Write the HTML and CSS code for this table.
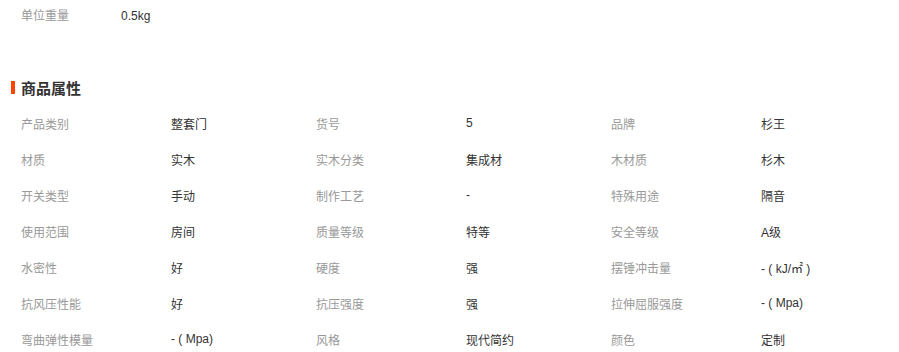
FILE: index.html
```html
<!DOCTYPE html>
<html lang="zh">
<head>
<meta charset="utf-8">
<link rel="stylesheet" href="styles.css">
</head>
<body>
<div class="page">
  <div class="top-row">
    <span class="top-label">单位重量</span>
    <span class="top-value">0.5kg</span>
  </div>
  <h2 class="section-title"><span class="bar"></span>商品属性</h2>
  <div class="attrs">
    <span class="k">产品类别</span><span class="v">整套门</span>
    <span class="k">货号</span><span class="v">5</span>
    <span class="k">品牌</span><span class="v">杉王</span>
    <span class="k">材质</span><span class="v">实木</span>
    <span class="k">实木分类</span><span class="v">集成材</span>
    <span class="k">木材质</span><span class="v">杉木</span>
    <span class="k">开关类型</span><span class="v">手动</span>
    <span class="k">制作工艺</span><span class="v">-</span>
    <span class="k">特殊用途</span><span class="v">隔音</span>
    <span class="k">使用范围</span><span class="v">房间</span>
    <span class="k">质量等级</span><span class="v">特等</span>
    <span class="k">安全等级</span><span class="v">A级</span>
    <span class="k">水密性</span><span class="v">好</span>
    <span class="k">硬度</span><span class="v">强</span>
    <span class="k">摆锤冲击量</span><span class="v">- ( kJ/㎡ )</span>
    <span class="k">抗风压性能</span><span class="v">好</span>
    <span class="k">抗压强度</span><span class="v">强</span>
    <span class="k">拉伸屈服强度</span><span class="v">- ( Mpa)</span>
    <span class="k">弯曲弹性模量</span><span class="v">- ( Mpa)</span>
    <span class="k">风格</span><span class="v">现代简约</span>
    <span class="k">颜色</span><span class="v">定制</span>
  </div>
</div>
</body>
</html>
```
FILE: styles.css
```css
html, body {
  margin: 0;
  padding: 0;
  background: #fff;
}
body {
  font-family: "Liberation Sans", "Noto Sans CJK SC", sans-serif;
  font-size: 12px;
  color: #333;
}
.page {
  width: 899px;
}
.top-row {
  display: flex;
  padding-left: 21px;
  height: 32px;
  line-height: 32px;
}
.top-label {
  width: 100px;
  color: #999;
}
.top-value {
  color: #333;
}
.section-title {
  display: flex;
  align-items: center;
  margin: 45px 0 0 0;
  padding-left: 11px;
  height: 20px;
  font-size: 15px;
  font-weight: bold;
  color: #333;
}
.bar {
  width: 4px;
  height: 13px;
  background: #ff4400;
  margin-right: 6px;
}
.attrs {
  display: grid;
  grid-template-columns: 150px 145px 150px 145px 150px 145px;
  grid-auto-rows: 36px;
  align-items: center;
  margin-top: 8px;
  padding-left: 21px;
}
.k {
  color: #999;
}
.v {
  color: #333;
  white-space: pre;
}
```
